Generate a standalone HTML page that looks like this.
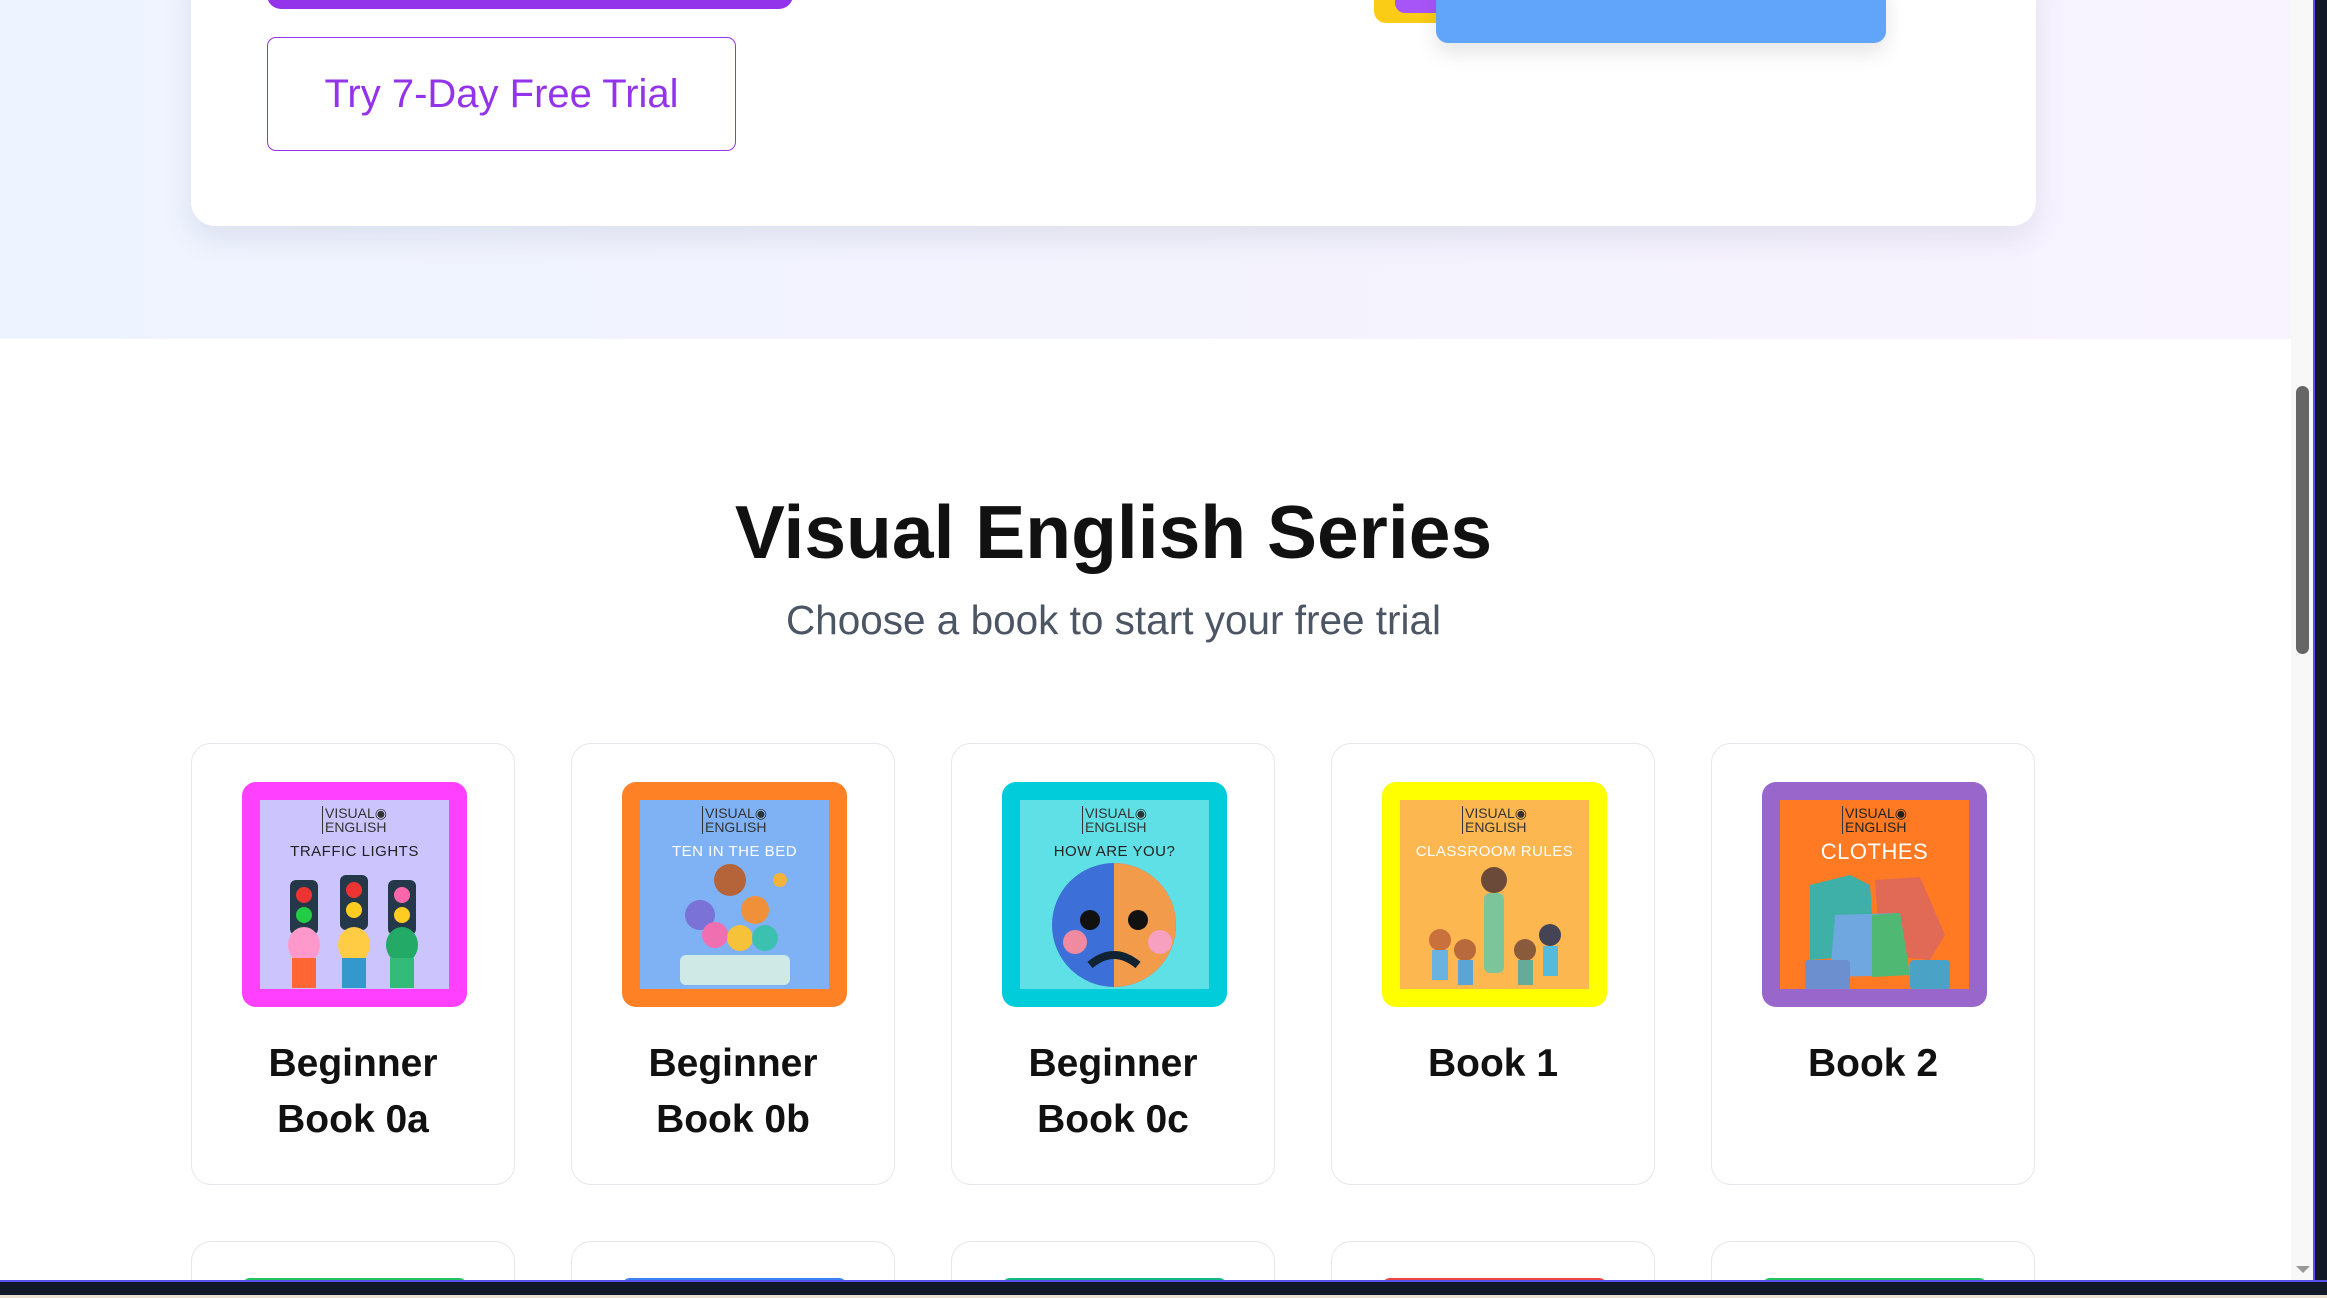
<!DOCTYPE html>
<html><head><meta charset="utf-8"><style>
*{margin:0;padding:0;box-sizing:border-box}
html,body{width:2327px;height:1298px;overflow:hidden}
body{background:#fff;font-family:"Liberation Sans",sans-serif;position:relative}
.abs{position:absolute}
.hero{left:0;top:0;width:2291px;height:339px;background:linear-gradient(90deg,#eef4ff 0%,#f3f3fd 50%,#f8f3ff 100%)}
.card{left:191px;top:-40px;width:1845px;height:266px;background:#fff;border-radius:24px;box-shadow:0 12px 30px rgba(80,80,120,0.12)}
.trial{left:267px;top:37px;width:469px;height:114px;border:1.5px solid #9333ea;border-radius:9px;color:#9333ea;font-size:40px;display:flex;align-items:center;justify-content:center}
.bk{width:324px;height:442px;border:1.5px solid #e5e7eb;border-radius:20px;background:#fff;top:743px}
.cov{position:absolute;left:50px;top:38px;width:225px;height:225px;border-radius:14px}
.in{position:absolute;left:18px;top:18px;right:18px;bottom:18px;overflow:hidden;text-align:center}
.ve{font-size:14px;line-height:14px;color:#333;margin-top:6px;display:inline-block;border-left:1px solid #333;padding-left:2px;text-align:left}
.tt{font-size:15px;margin-top:6px;color:#222;letter-spacing:.5px}
.nm{position:absolute;left:0;right:0;top:292px;text-align:center;font-size:39px;font-weight:bold;line-height:56px;color:#111}
.bk2{width:324px;height:50px;border:1.5px solid #e5e7eb;border-bottom:none;border-radius:20px 20px 0 0;background:#fff;top:1241px}
</style></head><body>
<div class="abs hero"></div>
<div class="abs card"></div>
<div class="abs" style="left:267px;top:-20px;width:526px;height:29px;background:#9333ea;border-radius:0 0 14px 14px"></div>
<div class="abs" style="left:1374px;top:-20px;width:70px;height:43px;background:#facc15;border-radius:0 0 8px 12px"></div>
<div class="abs" style="left:1395px;top:-20px;width:50px;height:33px;background:#a855f7;border-radius:0 0 8px 10px"></div>
<div class="abs" style="left:1436px;top:-20px;width:450px;height:63px;background:#60a5fa;border-radius:0 0 12px 12px;box-shadow:0 10px 20px rgba(0,0,0,0.1)"></div>
<div class="abs trial">Try 7-Day Free Trial</div>

<div class="abs" style="left:0;top:492px;width:2227px;text-align:center;font-size:75px;font-weight:bold;color:#111;line-height:80px">Visual English Series</div>
<div class="abs" style="left:0;top:595px;width:2227px;text-align:center;font-size:40.5px;color:#4b5563;line-height:50px">Choose a book to start your free trial</div>

<div class="abs bk" style="left:191px"><div class="cov" style="background:#ff40ff"><div class="in" style="background:#ccc5fd"><div class="ve">VISUAL◉<br>ENGLISH</div><div class="tt">TRAFFIC LIGHTS</div>
<svg width="189" height="130" viewBox="0 0 189 130"><rect x="30" y="20" width="28" height="55" rx="6" fill="#24384a"/><rect x="80" y="15" width="28" height="55" rx="6" fill="#24384a"/><rect x="128" y="20" width="28" height="55" rx="6" fill="#24384a"/><circle cx="44" cy="35" r="8" fill="#e33"/><circle cx="44" cy="55" r="8" fill="#2c4"/><circle cx="94" cy="30" r="8" fill="#e33"/><circle cx="94" cy="50" r="8" fill="#fc2"/><circle cx="142" cy="35" r="8" fill="#f6a"/><circle cx="142" cy="55" r="8" fill="#fc2"/><ellipse cx="44" cy="85" rx="16" ry="18" fill="#f9c"/><rect x="32" y="98" width="24" height="30" fill="#f63"/><ellipse cx="94" cy="85" rx="16" ry="18" fill="#fc4"/><rect x="82" y="98" width="24" height="30" fill="#39c"/><ellipse cx="142" cy="85" rx="16" ry="18" fill="#2a6"/><rect x="130" y="98" width="24" height="30" fill="#3b7"/></svg></div></div>
<div class="nm">Beginner<br>Book 0a</div></div>

<div class="abs bk" style="left:571px"><div class="cov" style="background:#ff8126"><div class="in" style="background:#7fb2f5"><div class="ve">VISUAL◉<br>ENGLISH</div><div class="tt" style="color:#fff">TEN IN THE BED</div>
<svg width="189" height="130" viewBox="0 0 189 130"><circle cx="90" cy="20" r="16" fill="#b5643a"/><circle cx="60" cy="55" r="15" fill="#7a72d6"/><circle cx="115" cy="50" r="14" fill="#f0913a"/><circle cx="75" cy="75" r="13" fill="#f06fb0"/><circle cx="100" cy="78" r="13" fill="#f5c23a"/><circle cx="125" cy="78" r="13" fill="#3cc0b0"/><rect x="40" y="95" width="110" height="30" rx="6" fill="#cfe9e6"/><circle cx="140" cy="20" r="7" fill="#f5b33a"/></svg></div></div>
<div class="nm">Beginner<br>Book 0b</div></div>

<div class="abs bk" style="left:951px"><div class="cov" style="background:#00cdd9"><div class="in" style="background:#5fe0e6"><div class="ve">VISUAL◉<br>ENGLISH</div><div class="tt">HOW ARE YOU?</div>
<svg width="189" height="130" viewBox="0 0 189 130"><ellipse cx="94" cy="65" rx="62" ry="62" fill="#3d6fd8"/><path d="M94 3 A62 62 0 0 1 94 127 Z" fill="#f29b4a"/><circle cx="70" cy="60" r="10" fill="#111"/><circle cx="118" cy="60" r="10" fill="#111"/><circle cx="55" cy="82" r="12" fill="#f08aa0"/><circle cx="140" cy="82" r="12" fill="#f7a0c0"/><path d="M70 105 Q94 85 118 105" stroke="#123" stroke-width="8" fill="none"/></svg></div></div>
<div class="nm">Beginner<br>Book 0c</div></div>

<div class="abs bk" style="left:1331px"><div class="cov" style="background:#ffff00"><div class="in" style="background:#fdb750"><div class="ve">VISUAL◉<br>ENGLISH</div><div class="tt" style="color:#fff">CLASSROOM RULES</div>
<svg width="189" height="130" viewBox="0 0 189 130"><circle cx="94" cy="20" r="13" fill="#6b4a3a"/><rect x="84" y="33" width="20" height="80" rx="6" fill="#7cc49a"/><circle cx="40" cy="80" r="11" fill="#c9703c"/><rect x="32" y="90" width="16" height="30" fill="#6ab3e0"/><circle cx="65" cy="90" r="11" fill="#b86a3c"/><rect x="58" y="100" width="15" height="25" fill="#5aa4d6"/><circle cx="125" cy="90" r="11" fill="#8a5a3c"/><rect x="118" y="100" width="15" height="25" fill="#6a9"/><circle cx="150" cy="75" r="11" fill="#445"/><rect x="143" y="86" width="15" height="30" fill="#5bd"/></svg></div></div>
<div class="nm">Book 1</div></div>

<div class="abs bk" style="left:1711px"><div class="cov" style="background:#9966cc"><div class="in" style="background:#ff7a22"><div class="ve" style="color:#222">VISUAL◉<br>ENGLISH</div><div class="tt" style="color:#fff;font-size:22px;margin-top:2px">CLOTHES</div>
<svg width="189" height="130" viewBox="0 0 189 130"><path d="M30 20 L70 10 L90 20 L95 90 L30 95 Z" fill="#3fb0a8"/><path d="M95 15 L140 12 L165 70 L150 95 L100 90 Z" fill="#e06a55"/><path d="M55 50 L120 48 L130 110 L50 112 Z" fill="#6fa8e0"/><path d="M92 50 L120 48 L130 110 L92 112 Z" fill="#4fb873"/><rect x="25" y="95" width="45" height="30" rx="4" fill="#6c8fd0"/><rect x="130" y="95" width="40" height="30" rx="4" fill="#4aa3c7"/></svg></div></div>
<div class="nm">Book 2</div></div>

<div class="abs bk2" style="left:191px"><div class="abs" style="left:50px;top:36px;width:225px;height:10px;background:#22c55e;border-radius:8px 8px 0 0"></div></div>
<div class="abs bk2" style="left:571px"><div class="abs" style="left:50px;top:36px;width:225px;height:10px;background:#3b82f6;border-radius:8px 8px 0 0"></div></div>
<div class="abs bk2" style="left:951px"><div class="abs" style="left:50px;top:36px;width:225px;height:10px;background:#10b981;border-radius:8px 8px 0 0"></div></div>
<div class="abs bk2" style="left:1331px"><div class="abs" style="left:50px;top:36px;width:225px;height:10px;background:#ef4444;border-radius:8px 8px 0 0"></div></div>
<div class="abs bk2" style="left:1711px"><div class="abs" style="left:50px;top:36px;width:225px;height:10px;background:#22c55e;border-radius:8px 8px 0 0"></div></div>

<div class="abs" style="left:2291px;top:0;width:22px;height:1281px;background:#f8f8f8"></div>
<div class="abs" style="left:2296px;top:386px;width:13px;height:268px;background:#666;border-radius:7px"></div>
<div class="abs" style="left:2296px;top:1266px;width:0;height:0;border-left:7px solid transparent;border-right:7px solid transparent;border-top:7px solid #999"></div>
<div class="abs" style="left:2313px;top:0;width:14px;height:1298px;background:#111827;border-left:2px solid #5b4ff0"></div>
<div class="abs" style="left:0;top:1280px;width:2327px;height:18px;background:#111827;border-top:2px solid #5b4ff0"></div>
<div class="abs" style="left:0;top:1295px;width:2327px;height:3px;background:#eadfd0"></div>
</body></html>
